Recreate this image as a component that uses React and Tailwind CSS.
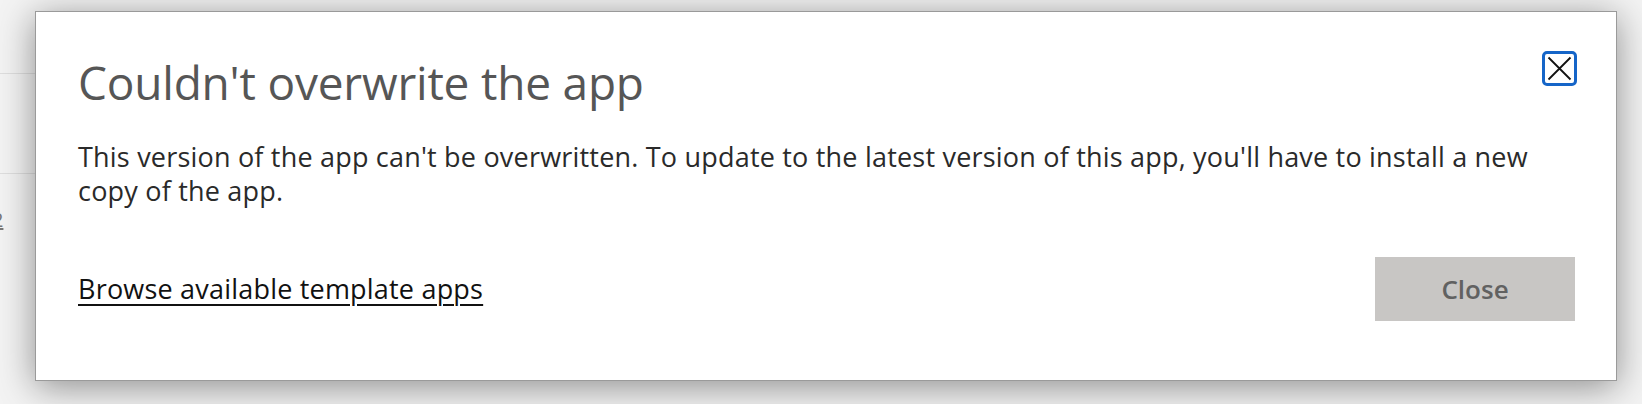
import React from 'react';

export default function App() {
  return (
    <div
      className="relative w-[1642px] h-[404px] overflow-hidden bg-[#f3f3f3]"
      style={{ fontFamily: '"Open Sans", "Noto Sans", Arial, sans-serif' }}
    >
      {/* page behind the dialog */}
      <div className="absolute left-0 top-0 w-[60px] h-full">
        <div className="mt-[73px] h-px bg-[#dedede]" />
        <div className="mt-[99px] h-px bg-[#dedede]" />
        <div className="mt-[36px] text-[20px] leading-none text-[#777] underline -ml-[8px]">2</div>
      </div>

      <div className="relative pt-[11px] pl-[35px]">
        <div className="w-[1582px] h-[370px] bg-white border border-[#9a9a9a] shadow-[0_6px_34px_rgba(0,0,0,0.42)] flex flex-col pl-[42px] pr-[39px]">
          <div className="flex items-start justify-between pt-[39px]">
            <h1 className="mt-[3px] text-[46px] leading-[56px] font-normal text-[#565656] tracking-[-0.2px]">
              Couldn't overwrite the app
            </h1>
            <button className="w-[35px] h-[35px] rounded-[5px] border-[3px] border-[#1565c8] flex items-center justify-center">
              <svg width="25" height="25" viewBox="0 0 25 25">
                <path d="M1.5 1.5 L23.5 23.5 M23.5 1.5 L1.5 23.5" stroke="#111" strokeWidth="1.8" fill="none" />
              </svg>
            </button>
          </div>

          <p className="mt-[30px] text-[27px] leading-[34px] text-[#2a2a2a] pr-[30px] tracking-[0.2px]">
            This version of the app can't be overwritten. To update to the latest version of this app, you'll have to install a new copy of the app.
          </p>

          <div className="flex items-center justify-between mt-[49px] pr-[2px]">
            <a href="#" className="text-[27px] leading-[34px] text-[#111] underline underline-offset-[5px] decoration-[1.5px] tracking-[0.2px]">
              Browse available template apps
            </a>
            <button className="w-[200px] h-[64px] bg-[#c8c6c4] text-[#616161] text-[26px] font-semibold">
              Close
            </button>
          </div>
        </div>
      </div>
    </div>
  );
}
